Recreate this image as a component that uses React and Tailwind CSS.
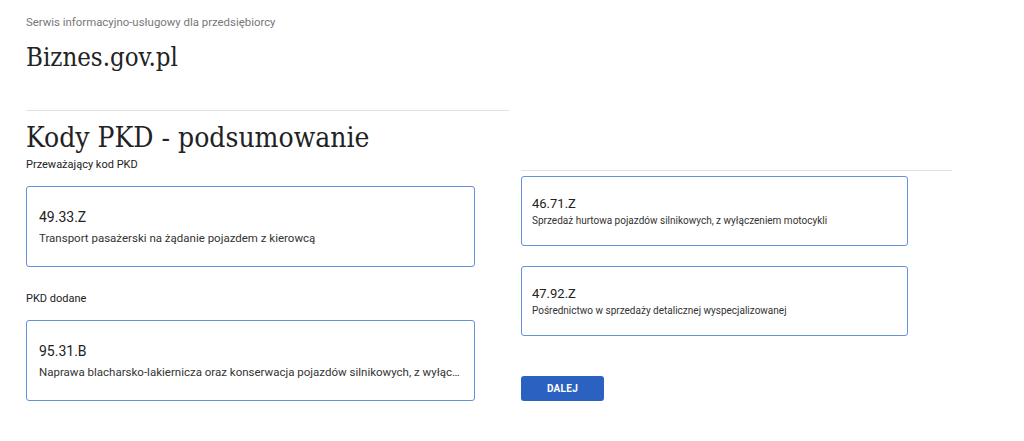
import React from "react";

const serif = { fontFamily: '"DejaVu Serif Condensed", "DejaVu Serif", serif' };

function LeftBox({ code, desc }) {
  return (
    <div className="w-[449px] h-[81px] border-[1.5px] border-[#6590da] rounded-[3px] flex flex-col justify-center px-[12px] gap-[5px]">
      <div className="text-[14px] leading-[18px] text-[#222]">{code}</div>
      <div className="text-[11.5px] leading-[14px] text-[#333] whitespace-nowrap overflow-hidden text-ellipsis">{desc}</div>
    </div>
  );
}

function RightBox({ code, desc }) {
  return (
    <div className="w-[387px] h-[70px] border-[1.5px] border-[#6590da] rounded-[3px] flex flex-col justify-center px-[10px] gap-[2px]">
      <div className="text-[13px] leading-[16px] text-[#222]">{code}</div>
      <div className="text-[10px] leading-[13px] text-[#333] whitespace-nowrap overflow-hidden text-ellipsis">{desc}</div>
    </div>
  );
}

export default function App() {
  return (
    <div
      className="w-[1024px] h-[441px] bg-white overflow-hidden flex gap-[12px] pl-[26px]"
      style={{ fontFamily: 'Roboto, "Liberation Sans", sans-serif' }}
    >
      <div className="w-[483px] flex flex-col">
        <div className="mt-[15px] text-[11.4px] leading-[14px] text-[#777]">
          Serwis informacyjno-usługowy dla przedsiębiorcy
        </div>
        <div className="mt-[12px] text-[25.6px] leading-[32px] text-[#222]" style={serif}>
          Biznes.gov.pl
        </div>
        <div className="mt-[37px] h-px bg-[#e2e2e2]" />
        <div className="mt-[7px] text-[28px] leading-[40px] text-[#222]" style={serif}>
          Kody PKD - podsumowanie
        </div>
        <div className="text-[11px] leading-[14px] text-[#222]">Przeważający kod PKD</div>
        <div className="mt-[14px]">
          <LeftBox code="49.33.Z" desc="Transport pasażerski na żądanie pojazdem z kierowcą" />
        </div>
        <div className="mt-[25px] text-[11px] leading-[14px] text-[#222]">PKD dodane</div>
        <div className="mt-[14px]">
          <LeftBox
            code="95.31.B"
            desc="Naprawa blacharsko-lakiernicza oraz konserwacja pojazdów silnikowych, z wyłączeniem motocykli"
          />
        </div>
      </div>
      <div className="w-[431px] flex flex-col">
        <div className="mt-[170px] h-px bg-[#e2e2e2]" />
        <div className="mt-[5px]">
          <RightBox code="46.71.Z" desc="Sprzedaż hurtowa pojazdów silnikowych, z wyłączeniem motocykli" />
        </div>
        <div className="mt-[20px]">
          <RightBox code="47.92.Z" desc="Pośrednictwo w sprzedaży detalicznej wyspecjalizowanej" />
        </div>
        <button className="mt-[40px] w-[83px] h-[25px] rounded-[3px] bg-[#2b62c1] text-white text-[10px] font-bold tracking-[0.3px] flex items-center justify-center">
          DALEJ
        </button>
      </div>
    </div>
  );
}
